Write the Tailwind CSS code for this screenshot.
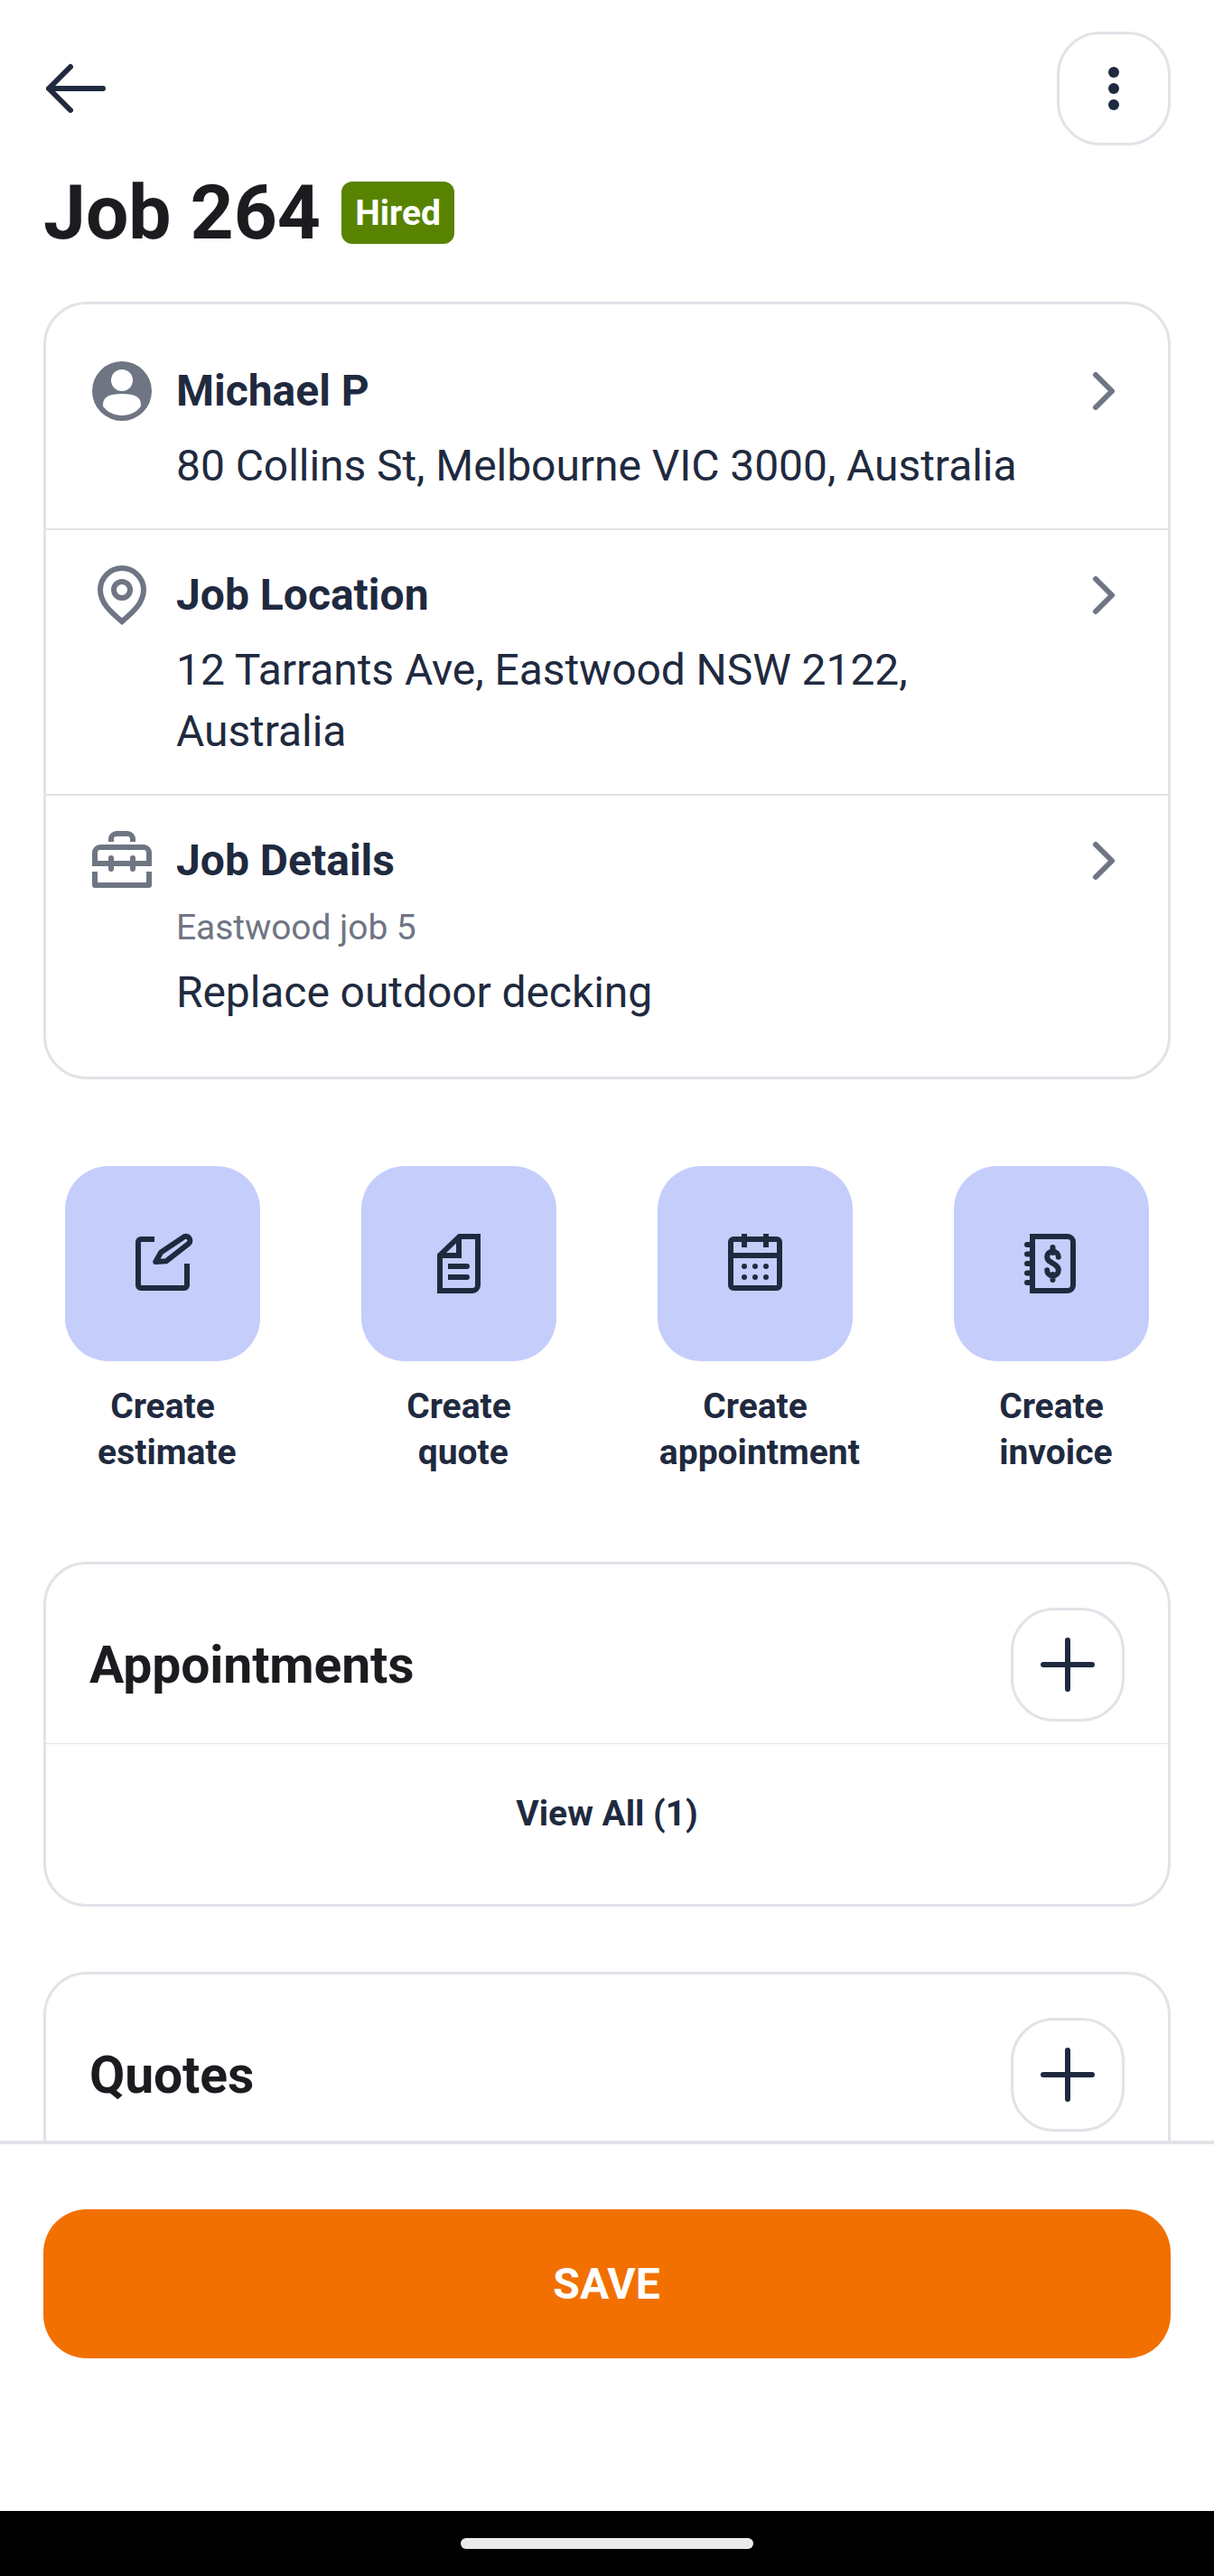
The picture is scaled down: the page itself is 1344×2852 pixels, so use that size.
<!DOCTYPE html>
<html lang="en">
<head>
<meta charset="utf-8">
<title>Job 264</title>
<script src="https://cdn.jsdelivr.net/npm/@tailwindcss/browser@4"></script>
</head>
<body class="bg-white font-['Roboto',sans-serif] text-[#1f2a3f] antialiased">
<div class="flex h-[2852px] w-[1344px] flex-col overflow-hidden">
  <main class="h-[2370px] shrink-0 overflow-hidden px-12 pt-[35px]">
    <header class="flex items-center justify-between">
      <svg class="size-[72px]" viewBox="0 0 72 72" fill="none" stroke="currentColor" stroke-width="6" stroke-linecap="round" stroke-linejoin="round"><path d="M66 36H6M30 12 6 36l24 24"/></svg>
      <button class="flex size-[126px] items-center justify-center rounded-[48px] border-3 border-[#e2e2e8]">
        <svg class="size-[72px]" viewBox="0 0 24 24" fill="currentColor"><circle cx="12" cy="6" r="2"/><circle cx="12" cy="12" r="2"/><circle cx="12" cy="18" r="2"/></svg>
      </button>
    </header>

    <div class="mt-[19px] flex h-[111px] items-center gap-[23px]">
      <h1 class="text-[84px] leading-[108px] font-bold text-[#1c1b1f]">Job 264</h1>
      <span class="flex h-[69px] w-[125px] items-center justify-center rounded-xl bg-[#588300] pt-px text-[39px] font-bold text-white">Hired</span>
    </div>

    <section class="mt-[43px] rounded-[48px] border-3 border-[#e2e2e8] pt-6 pb-6">
      <div class="flex border-b-2 border-[#e2e2e8] pt-9 pr-9 pb-[35px] pl-12">
        <svg class="mr-6 size-[72px] shrink-0 text-[#6f7583]" viewBox="0 0 24 24" fill="currentColor"><circle cx="12" cy="12" r="11"/><circle cx="12" cy="8" r="4" fill="#fff"/><path fill="#fff" d="M12 13c-4.600 0-7 1.200-7 4v.6C6.600 19.800 9.200 21 12 21s5.400-1.200 7-3.400V17c0-2.800-2.400-4-7-4z"/></svg>
        <div class="flex-1">
          <h2 class="text-[48px] leading-[72px] font-bold">Michael P</h2>
          <p class="mt-[13px] text-[48px] leading-[68px] tracking-[-0.06px]">80 Collins St, Melbourne VIC 3000, Australia</p>
        </div>
        <svg class="-ml-18 size-[72px] shrink-0 text-[#6f7583]" viewBox="0 0 72 72" fill="none" stroke="currentColor" stroke-width="6" stroke-linecap="round" stroke-linejoin="round"><path d="m28 18 18 18-18 18"/></svg>
      </div>
      <div class="flex border-b-2 border-[#e2e2e8] pt-9 pr-9 pb-[35px] pl-12">
        <svg class="mr-6 size-[72px] shrink-0 text-[#6f7583]" viewBox="0 0 24 24" fill="none" stroke="currentColor" stroke-width="2"><path d="M20 10c0 4.700-3.700 8.100-8 11.700C7.700 18.100 4 14.700 4 10a8 8 0 0 1 16 0z"/><circle cx="12" cy="10" r="3"/></svg>
        <div class="flex-1">
          <h2 class="text-[48px] leading-[72px] font-bold">Job Location</h2>
          <p class="mt-[13px] text-[48px] leading-[68px] tracking-[-0.06px]">12 Tarrants Ave, Eastwood NSW 2122,<br>Australia</p>
        </div>
        <svg class="-ml-18 size-[72px] shrink-0 text-[#6f7583]" viewBox="0 0 72 72" fill="none" stroke="currentColor" stroke-width="6" stroke-linecap="round" stroke-linejoin="round"><path d="m28 18 18 18-18 18"/></svg>
      </div>
      <div class="flex pt-9 pr-9 pb-[35px] pl-12">
        <svg class="mr-6 size-[72px] shrink-0 text-[#6f7583]" viewBox="0 0 24 24" fill="none" stroke="currentColor" stroke-width="2"><path d="M8 5V4a2 2 0 0 1 2-2h4a2 2 0 0 1 2 2v1M2 13V9a2 2 0 0 1 2-2h16a2 2 0 0 1 2 2v4z"/><path stroke-linejoin="round" d="M2 16v5h20v-5"/><path stroke-linecap="round" d="M8 11v4M16 11v4"/></svg>
        <div class="flex-1">
          <h2 class="text-[48px] leading-[72px] font-bold">Job Details</h2>
          <p class="mt-[11px] text-[39px] leading-[55px] tracking-[-0.08px] text-[#6f7583]">Eastwood job 5</p>
          <p class="mt-[10px] text-[48px] leading-[68px] tracking-[-0.08px]">Replace outdoor decking</p>
        </div>
        <svg class="-ml-18 size-[72px] shrink-0 text-[#6f7583]" viewBox="0 0 72 72" fill="none" stroke="currentColor" stroke-width="6" stroke-linecap="round" stroke-linejoin="round"><path d="m28 18 18 18-18 18"/></svg>
      </div>
    </section>

    <nav class="mt-24 flex justify-between px-6">
      <div class="flex w-[216px] flex-col items-center">
        <div class="flex size-[216px] items-center justify-center rounded-[48px] bg-[#c5cdfb]">
          <svg class="size-[72px]" viewBox="0 0 24 24" fill="none" stroke="currentColor" stroke-width="2" stroke-linejoin="round"><path d="M9 3H4a1 1 0 0 0-1 1v16a1 1 0 0 0 1 1h16a1 1 0 0 0 1-1v-8"/><path d="m9.400 11.300 2-3.500 8.200-5.500a1.500 1.500 0 0 1 2 2.300l-8.300 6.500z"/></svg>
        </div>
        <p class="mt-[25px] text-center text-[39px] leading-[51px] font-bold whitespace-pre">Create
 estimate</p>
      </div>
      <div class="flex w-[216px] flex-col items-center">
        <div class="flex size-[216px] items-center justify-center rounded-[48px] bg-[#c5cdfb]">
          <svg class="size-[72px]" viewBox="0 0 24 24" fill="none" stroke="currentColor" stroke-width="2"><path d="M5 22V8.900L12.200 2H19v18a2 2 0 0 1-2 2z"/><path d="M12 2v7H5"/><path d="M8 13h7M8 17h7"/><path stroke-linecap="round" d="M14 13h1M14 17h1"/></svg>
        </div>
        <p class="mt-[25px] text-center text-[39px] leading-[51px] font-bold whitespace-pre">Create
 quote</p>
      </div>
      <div class="flex w-[216px] flex-col items-center">
        <div class="flex size-[216px] items-center justify-center rounded-[48px] bg-[#c5cdfb]">
          <svg class="size-[72px]" viewBox="0 0 24 24" fill="none" stroke="currentColor" stroke-width="2"><rect x="3" y="3" width="18" height="18" rx="1"/><path d="M3 9h18M8 1v5M16 1v5"/><g fill="currentColor" stroke="none"><circle cx="8" cy="13" r="1"/><circle cx="12" cy="13" r="1"/><circle cx="16" cy="13" r="1"/><circle cx="8" cy="17" r="1"/><circle cx="12" cy="17" r="1"/><circle cx="16" cy="17" r="1"/></g></svg>
        </div>
        <p class="mt-[25px] text-center text-[39px] leading-[51px] font-bold whitespace-pre">Create
 appointment</p>
      </div>
      <div class="flex w-[216px] flex-col items-center">
        <div class="flex size-[216px] items-center justify-center rounded-[48px] bg-[#c5cdfb]">
          <svg class="size-[72px]" viewBox="0 0 24 24" fill="none" stroke="currentColor" stroke-width="2"><path d="M5 2h13a2 2 0 0 1 2 2v16a2 2 0 0 1-2 2H5z"/><path stroke-linecap="round" d="M3 5h1M3 8.500h1M3 12h1M3 15.500h1M3 19h1M12.500 6v2M12.500 16v2M14.600 9.600c0-1.200-.9-2.100-2.100-2.100s-2.100.9-2.100 2c0 1 .6 1.500 1.300 1.900l1.600 1c.8.500 1.300 1 1.300 2 0 1.200-.9 2.100-2.100 2.100s-2.100-.9-2.100-2.100"/></svg>
        </div>
        <p class="mt-[25px] text-center text-[39px] leading-[51px] font-bold whitespace-pre">Create
 invoice</p>
      </div>
    </nav>

    <section class="mt-[95px] h-[382px] rounded-[48px] border-3 border-[#e2e2e8]">
      <div class="flex items-center justify-between border-b border-[#e2e2e8] px-12 pt-12 pb-6">
        <h2 class="pt-[2px] text-[57px] leading-[72px] font-bold tracking-[-0.1px] text-[#1c1b1f]">Appointments</h2>
        <button class="flex size-[126px] items-center justify-center rounded-[48px] border-3 border-[#e2e2e8]">
          <svg class="size-[72px]" viewBox="0 0 72 72" fill="none" stroke="currentColor" stroke-width="6" stroke-linecap="round"><path d="M36 9v54M9 36h54"/></svg>
        </button>
      </div>
      <div class="flex h-[155px] items-center justify-center text-[39px] font-bold">View All (1)</div>
    </section>

    <section class="mt-[72px] h-[382px] rounded-[48px] border-3 border-[#e2e2e8]">
      <div class="flex items-center justify-between border-b border-[#e2e2e8] px-12 pt-12 pb-6">
        <h2 class="pt-[2px] text-[57px] leading-[72px] font-bold tracking-[-0.1px] text-[#1c1b1f]">Quotes</h2>
        <button class="flex size-[126px] items-center justify-center rounded-[48px] border-3 border-[#e2e2e8]">
          <svg class="size-[72px]" viewBox="0 0 72 72" fill="none" stroke="currentColor" stroke-width="6" stroke-linecap="round"><path d="M36 9v54M9 36h54"/></svg>
        </button>
      </div>
    </section>
  </main>

  <footer class="flex h-[410px] shrink-0 flex-col border-t-4 border-[#e2e2e8] bg-white px-12 pt-18">
    <button class="flex h-[165px] items-center justify-center rounded-[48px] bg-[#f27000] pr-px text-[48px] font-bold text-white">SAVE</button>
  </footer>
  <div class="flex h-[72px] shrink-0 items-center justify-center bg-black">
    <div class="h-3 w-[324px] rounded-full bg-[#ebebeb]"></div>
  </div>
</div>
</body>
</html>
